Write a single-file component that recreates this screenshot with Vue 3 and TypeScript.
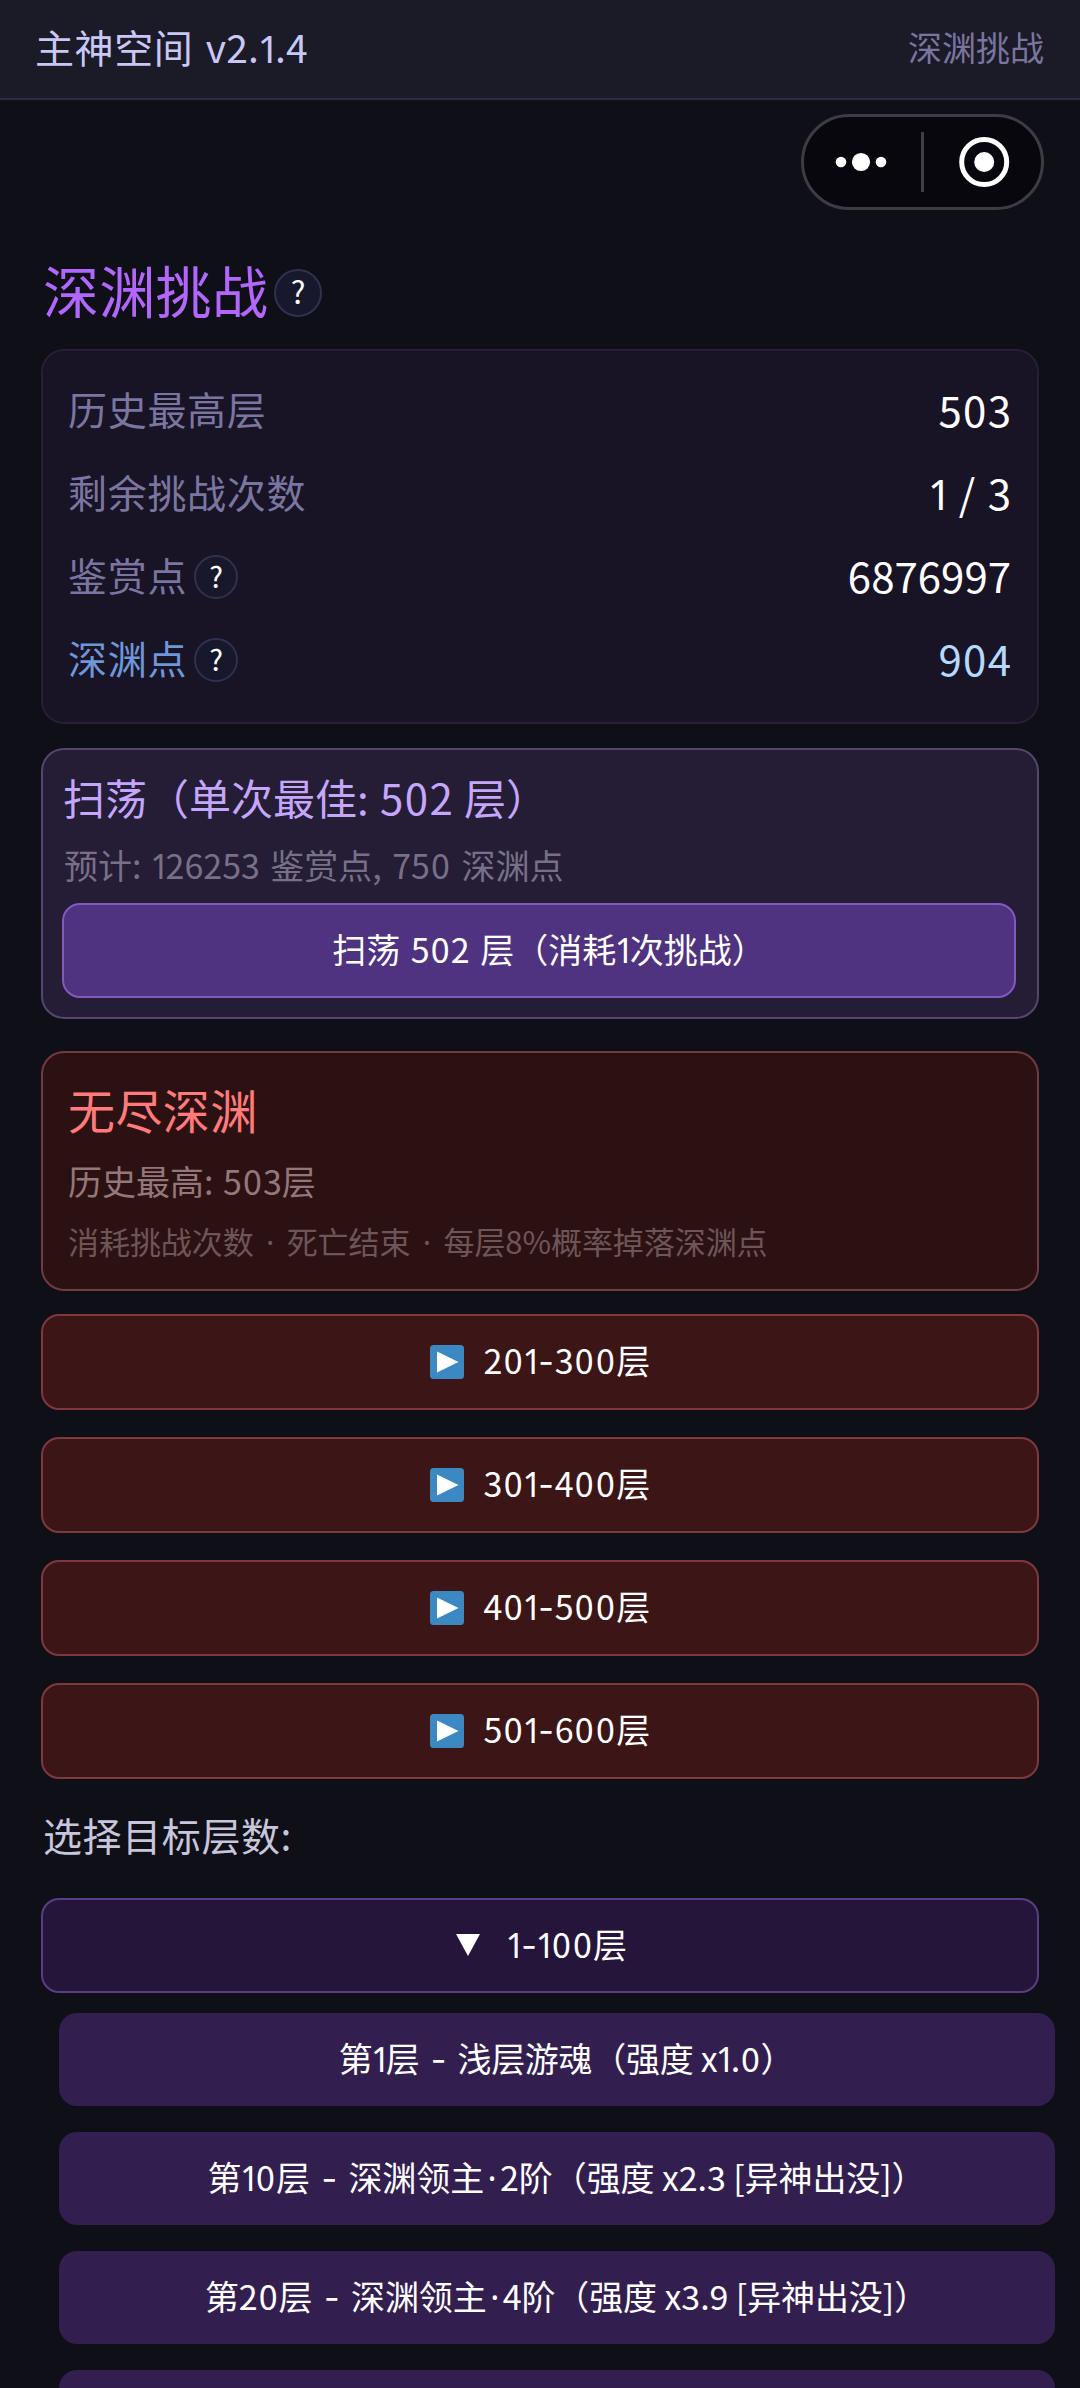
<script setup lang="ts">
import { h } from 'vue'

interface Stat {
  label: string
  value: string
  help?: boolean
  tone?: string
}

interface Floor {
  text: string
  tight?: boolean
}

const runClass: Record<string, string> = {
  '0': 'run-zero',
  '1': 'run-one',
  '-': 'run-dash',
  '·': 'run-dot',
}

const Spaced = (props: { text: string }) =>
  h(
    'span',
    { class: 'spaced' },
    props.text
      .split(/([01\-·])/)
      .filter((part) => part !== '')
      .map((part) => (runClass[part] ? h('span', { class: runClass[part] }, part) : part)),
  )
Spaced.props = ['text']

const stats: Stat[] = [
  { label: '历史最高层', value: '503' },
  { label: '剩余挑战次数', value: '1 / 3' },
  { label: '鉴赏点', value: '6876997', help: true },
  { label: '深渊点', value: '904', help: true, tone: 'abyss' },
]

const endlessRanges: string[] = ['201-300层', '301-400层', '401-500层', '501-600层']

const floors: Floor[] = [
  { text: '第1层 - 浅层游魂（强度 x1.0）', tight: true },
  { text: '第10层 - 深渊领主·2阶（强度 x2.3 [异神出没]）' },
  { text: '第20层 - 深渊领主·4阶（强度 x3.9 [异神出没]）' },
  { text: '' },
]
</script>

<template>
  <div class="page">
    <header class="topbar">
      <span class="app-name">主神空间 <Spaced class="version" text="v2.1.4" /></span>
      <span class="crumb">深渊挑战</span>
    </header>

    <div class="capsule">
      <svg width="237" height="90" viewBox="0 0 237 90">
        <circle cx="37" cy="45" r="5.3" fill="#fff" />
        <circle cx="57" cy="45" r="9.1" fill="#fff" />
        <circle cx="77" cy="45" r="5.3" fill="#fff" />
        <rect x="117" y="15" width="3" height="60" fill="#403f45" />
        <circle cx="180.200" cy="45" r="22.500" fill="none" stroke="#fff" stroke-width="5" />
        <circle cx="180.200" cy="45" r="10" fill="#fff" />
      </svg>
    </div>

    <main class="content">
      <div class="title-row">
        <h1>深渊挑战</h1>
        <span class="help big"><span>?</span></span>
      </div>

      <section class="card stats">
        <div v-for="s in stats" :key="s.label" class="stat" :class="s.tone">
          <span class="label">{{ s.label }}</span>
          <span v-if="s.help" class="help"><span>?</span></span>
          <span class="value"><Spaced :text="s.value" /></span>
        </div>
      </section>

      <section class="card sweep">
        <div class="sweep-title"><Spaced text="扫荡（单次最佳: 502 层）" /></div>
        <div class="sweep-sub"><Spaced text="预计: 126253 鉴赏点, 750 深渊点" /></div>
        <div class="btn sweep-btn"><Spaced text="扫荡 502 层（消耗1次挑战）" /></div>
      </section>

      <section class="card endless">
        <div class="endless-title">无尽深渊</div>
        <div class="endless-best"><Spaced text="历史最高: 503层" /></div>
        <div class="endless-note"><Spaced text="消耗挑战次数 · 死亡结束 · 每层8%概率掉落深渊点" /></div>
      </section>

      <div class="ranges">
        <div v-for="r in endlessRanges" :key="r" class="btn red">
          <svg class="play" width="34" height="34" viewBox="0 0 34 34">
            <rect width="34" height="34" rx="3.500" fill="#3b88c3" />
            <path d="M7 6.500 L28.500 17 L7 27.500 Z" fill="#fff" />
          </svg>
          <Spaced :text="r" />
        </div>
      </div>

      <div class="pick">选择目标层数:</div>

      <div class="btn purple">
        <svg class="down" width="24" height="22" viewBox="0 0 24 22">
          <path d="M0 0 H24 L12 22 Z" fill="#fff" />
        </svg>
        <Spaced text="1-100层" />
      </div>

      <div class="floors">
        <div v-for="(f, i) in floors" :key="i" class="btn floor" :class="{ tight: f.tight }">
          <Spaced :text="f.text" />
        </div>
      </div>
    </main>
  </div>
</template>

<style>
html,
body {
  background: #0f0f18;
  overflow: hidden;
}

.run-zero {
  margin: 0 0.032em;
}

.run-one {
  margin: 0 -0.125em 0 -0.045em;
  font-family: 'Noto Sans', sans-serif;
}

.run-dash {
  margin: 0 0.015em;
  font-family: Inter, sans-serif;
}

.run-dot {
  font-family: 'Noto Sans', sans-serif;
}
</style>

<style scoped>
.page {
  position: relative;
  box-sizing: border-box;
  width: 1080px;
  height: 2388px;
  overflow: hidden;
  background: #0f0f18;
  color: #fff;
  font-family: 'Noto Sans CJK SC', 'Noto Sans', sans-serif;
  font-weight: 400;
  white-space: nowrap;
}

.page * {
  box-sizing: border-box;
}

.topbar {
  display: flex;
  justify-content: space-between;
  align-items: center;
  height: 100px;
  padding: 0 36px 4px 35px;
  background: #1b1a27;
  border-bottom: 2px solid #2d2b45;
}

.app-name {
  font-size: 39px;
  letter-spacing: 0.6px;
  line-height: 56px;
  color: #c9c7f5;
}

.version {
  margin-left: 3px;
  letter-spacing: 0.2px;
}

.crumb {
  font-size: 34px;
  line-height: 50px;
  color: #79759f;
}

.capsule {
  position: absolute;
  top: 114px;
  left: 801px;
  width: 243px;
  height: 96px;
  border: 3px solid #3d3c42;
  border-radius: 48px;
  background: #08070e;
}

.capsule svg {
  display: block;
}

.content {
  padding: 160px 41px 0;
}

.title-row {
  display: flex;
  align-items: center;
  gap: 6px;
  height: 65px;
  padding-left: 2px;
  margin-bottom: 24px;
}

h1 {
  margin: -8px 0 0;
  font-size: 56px;
  letter-spacing: 0.300px;
  line-height: 80px;
  font-weight: 400;
  color: #b266fc;
}

.help {
  display: flex;
  align-items: center;
  justify-content: center;
  width: 44px;
  height: 44px;
  border: 2px solid #2f3150;
  border-radius: 50%;
  background: #17182b;
  color: #fff;
  font-size: 29px;
  line-height: 40px;
}

.help span {
  margin-top: -4px;
}

.help.big {
  width: 48px;
  height: 48px;
  font-size: 31px;
}

.card {
  border-radius: 23px;
  border: 2px solid;
}

.stats {
  height: 375px;
  padding: 18px 26px 0 25px;
  background: #181325;
  border-color: #261f36;
}

.stat {
  display: flex;
  align-items: center;
  height: 83px;
  color: #7a76a0;
}

.label {
  margin-top: -5px;
  font-size: 39px;
  letter-spacing: 0.700px;
}

.stat .help {
  margin-left: 7px;
}

.value {
  margin: -5px 0 0 auto;
  font-size: 42px;
  word-spacing: 3px;
  color: #fff;
}

.abyss {
  color: #6f96d8;
}

.abyss .value {
  color: #b5d9fc;
}

.sweep {
  height: 271px;
  margin-top: 24px;
  padding: 18px 21px 0 19px;
  background: #251c36;
  border-color: #55456f;
}

.sweep-title {
  height: 62px;
  line-height: 58px;
  padding-left: 1px;
  font-size: 42px;
  word-spacing: 2px;
  color: #c4a6fa;
}

.sweep-sub {
  height: 73px;
  line-height: 70px;
  padding-left: 2px;
  font-size: 34px;
  word-spacing: 2.800px;
  color: #777087;
}

.btn {
  display: flex;
  align-items: center;
  justify-content: center;
  height: 96px;
  padding-bottom: 2px;
  border-radius: 18px;
  border: 2px solid;
  color: #fff;
  font-size: 34px;
  line-height: 50px;
}

.sweep-btn {
  height: 95px;
  padding-left: 20px;
  word-spacing: 3px;
  background: #4f3280;
  border-color: #8259bf;
}

.endless {
  height: 240px;
  margin-top: 32px;
  padding: 24px 26px 0 25px;
  background: #2c1113;
  border-color: #743a40;
}

.endless-title {
  height: 68px;
  line-height: 63px;
  font-size: 47px;
  letter-spacing: 0.400px;
  color: #ff7a7a;
}

.endless-best {
  height: 72px;
  line-height: 71px;
  font-size: 34px;
  word-spacing: 2px;
  color: #94777b;
}

.endless-note {
  height: 48px;
  line-height: 47px;
  font-size: 31px;
  letter-spacing: -0.060px;
  color: #6e5558;
}

.endless-note :deep(.run-dot) {
  margin: 0 5.500px;
}

.ranges {
  display: flex;
  flex-direction: column;
  gap: 27px;
  margin-top: 23px;
}

.red {
  letter-spacing: 0.200px;
  background: #3c1516;
  border-color: #80383f;
}

.play {
  margin: 2px 20px 0 0;
}

.pick {
  height: 119px;
  padding: 0 0 9px 2px;
  line-height: 110px;
  font-size: 39px;
  letter-spacing: 0.600px;
  color: #c8c6dc;
}

.purple {
  height: 95px;
  padding-left: 3px;
  background: #26153b;
  border-color: #5a3d87;
}

.down {
  margin: 1px 27px 0 0;
}

.floors {
  display: flex;
  flex-direction: column;
  gap: 26px;
  margin: 20px -16px 0 18px;
}

.floor {
  height: 93px;
  flex: none;
  padding-left: 19px;
  letter-spacing: -0.100px;
  background: #331e50;
  border: none;
}

.floor.tight {
  letter-spacing: -0.300px;
}

.floor :deep(.run-dash) {
  margin: 0 4px;
}

.floor :deep(.run-dot) {
  margin: 0 3.500px;
}
</style>
